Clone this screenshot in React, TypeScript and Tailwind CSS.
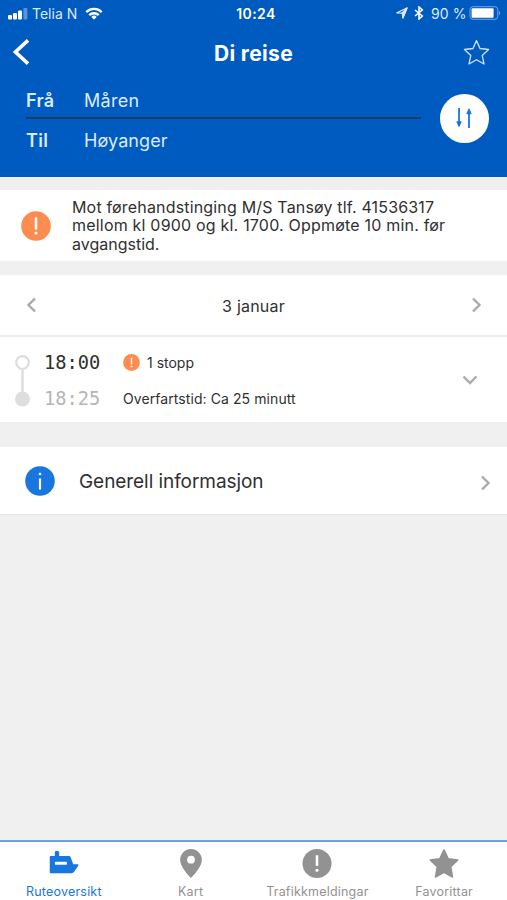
import React from "react";

const Chevron = ({ d, className }: { d: string; className: string }) => (
  <svg viewBox="0 0 16 16" className={className} fill="none" stroke="currentColor" strokeWidth="2.4">
    <path d={d} />
  </svg>
);

const Alert = ({ className }: { className: string }) => (
  <svg viewBox="0 0 30 30" className={className}>
    <circle cx="15" cy="15" r="14.8" fill="currentColor" />
    <path d="M15 7.4v10.2" stroke="#fff" strokeWidth="2.5" strokeLinecap="round" />
    <circle cx="15" cy="22" r="1.5" fill="#fff" />
  </svg>
);

function StatusBar() {
  return (
    <div className="grid h-7 grid-cols-3 items-center pl-2 pr-[6px] text-[14px] leading-7 text-[#dceaff]">
      <div className="flex items-center">
        <svg viewBox="0 0 20 12" className="h-3 w-5" fill="#fff">
          <rect x="0" y="7" width="4" height="4.5" rx="1" />
          <rect x="5" y="5" width="4" height="6.5" rx="1" />
          <rect x="10" y="2.5" width="4" height="9" rx="1" />
          <rect x="15.4" y="0" width="4" height="11.5" rx="1" opacity=".35" />
        </svg>
        <span className="ml-1 w-[46px] whitespace-nowrap text-[14px]">Telia N</span>
        <svg viewBox="0 0 18 13" className="-mt-[2px] ml-[7px] h-[13px] w-[18px]" fill="none" stroke="#fff" strokeWidth="2.3">
          <path d="M1.3 5.1a11 11 0 0 1 15.4 0M4.2 8.2a6.9 6.9 0 0 1 9.6 0" />
          <path d="M9 12.6 6.3 9.9a3.9 3.9 0 0 1 5.4 0Z" fill="#fff" stroke="none" />
        </svg>
      </div>
      <div className="pl-[3px] text-center font-semibold tracking-[0.4px] text-white">10:24</div>
      <div className="flex items-center justify-end">
        <svg viewBox="0 0 12 12" className="-mt-[2px] h-3 w-3" fill="none" stroke="#dceaff" strokeWidth="1.2" strokeLinejoin="round">
          <path d="M.8 5.8 11 1 6.9 11V6.2Z" />
          <path d="M6.2 5.9 11 1 6.9 11Z" fill="#dceaff" />
        </svg>
        <svg viewBox="0 0 10 14" className="-mt-[2px] ml-[6px] h-[14px] w-[10px]" fill="none" stroke="#fff" strokeWidth="1.6">
          <path d="m1 4 7.3 6L5 13V1l3.3 3L1 10" />
        </svg>
        <span className="ml-[7px] w-[38px] whitespace-nowrap text-[14px] tracking-[0.1px]">90 %</span>
        <svg viewBox="0 0 32 14" className="-mt-[2px] h-[14px] w-8" fill="none">
          <rect x="1" y=".7" width="27.8" height="12.6" rx="3" stroke="#72a6e3" />
          <rect x="2.6" y="2.3" width="22" height="9.4" rx="1" fill="#fff" />
          <path d="M30 5v4q1.2-.5 1.2-2T30 5Z" fill="#72a6e3" />
        </svg>
      </div>
    </div>
  );
}

function Header() {
  return (
    <header className="h-[177px] shrink-0 bg-[#005bc0] text-white">
      <StatusBar />
      <div className="flex h-[51px] items-center justify-between pl-3 pr-[17px]">
        <svg viewBox="0 0 18 26" className="-mt-[3px] h-[26px] w-[18px]" fill="none" stroke="#fff" strokeWidth="3.6">
          <path d="M16 1.4 3.4 13 16 24.6" />
        </svg>
        <h1 className="pl-[14px] pt-px text-[21px] font-bold tracking-[0.35px]">Di reise</h1>
        <svg viewBox="0 0 27 27" className="-mt-[2px] h-[27px] w-[27px]" fill="none" stroke="#cfe2fb" strokeWidth="1.3" strokeLinejoin="round">
          <path d="m13.5 1.5 3.5 8 8.6 1-6.4 5.9 1.8 8.6-7.5-4.3L6 25l1.8-8.6-6.4-5.9 8.6-1Z" />
        </svg>
      </div>
      <div className="flex items-center pl-[26px] pr-[18px]">
        <div className="w-[395px] text-[18px] text-[#dceaff]">
          <div className="flex h-10 items-center border-b-2 border-[#123b66] pt-[5px]">
            <b className="w-[58px] font-semibold tracking-[0.3px]">Frå</b>
            <span className="tracking-[0.3px]">Måren</span>
          </div>
          <div className="flex h-[42px] items-center">
            <b className="w-[58px] font-semibold tracking-[0.3px]">Til</b>
            <span className="tracking-[0.1px]">Høyanger</span>
          </div>
        </div>
        <div className="ml-auto flex h-[49px] w-[49px] -translate-y-[2px] items-center justify-center rounded-full bg-white">
          <svg viewBox="0 0 18 22" className="-ml-[1px] h-[22px] w-[18px]" fill="#1976df" stroke="#1976df">
            <path d="M4 1v17M14 21V4" strokeWidth="1.8" fill="none" />
            <path d="M1.8 14.8h4.4L4 19.5ZM11.8 6.8h4.4L14 1.8Z" />
          </svg>
        </div>
      </div>
    </header>
  );
}

function Trip() {
  return (
    <section className="mt-[14px] h-[147px] shrink-0 bg-white text-[#303030]">
      <div className="flex h-[62px] items-center justify-between border-b-2 border-[#ededed] px-[23px]">
        <Chevron d="M12 1.5 5.5 8l6.500 6.500" className="h-4 w-4 text-[#aaa]" />
        <span className="pt-[2px] text-[16px] tracking-[0.2px]">3 januar</span>
        <Chevron d="m5 1.5 6.500 6.500L5 14.500" className="h-4 w-4 text-[#aaa]" />
      </div>
      <div className="flex h-[85px] items-center pl-[14px] pr-[29px]">
        <svg viewBox="0 0 17 54" className="mt-[2px] h-[54px] w-[17px]">
          <path d="M8.5 14v26" stroke="#dedede" strokeWidth="2.5" />
          <circle cx="8.5" cy="8.5" r="6.3" fill="#fff" stroke="#dedede" strokeWidth="2.3" />
          <circle cx="8.5" cy="45" r="7.5" fill="#dedede" />
        </svg>
        <div className="ml-[13px] mt-[2px] w-[79px] font-['DejaVu_Sans_Mono',monospace] text-[18.7px] leading-9">
          <div>18:00</div>
          <div className="text-[#b6b6b6]">18:25</div>
        </div>
        <div className="mt-[2px] text-[14px] leading-9">
          <div className="flex items-center">
            <Alert className="mr-[7px] h-[17px] w-[17px] text-[#fd8c50]" />
            <span>1 stopp</span>
          </div>
          <div className="whitespace-nowrap tracking-[0.08px]">Overfartstid: Ca 25 minutt</div>
        </div>
        <Chevron d="M1.5 4.5 8 11 14.5 4.5" className="ml-auto h-4 w-4 text-[#aaa]" />
      </div>
    </section>
  );
}

function Tab({ label, active, children }: { label: string; active?: boolean; children: React.ReactNode }) {
  return (
    <div className={`flex flex-1 flex-col items-center pl-px pt-[6px] ${active ? "text-[#1976df]" : "text-[#929292]"}`}>
      <svg viewBox="0 0 32 32" className="h-8 w-8" fill="currentColor">{children}</svg>
      <span className="mt-[5px] whitespace-nowrap text-[12.5px] leading-4 tracking-[0.2px]">{label}</span>
    </div>
  );
}

export default function App() {
  return (
    <div className="flex h-[900px] w-[507px] flex-col overflow-hidden bg-[#f0f0f0] font-[Inter,sans-serif]">
      <Header />
      <section className="mt-[13px] flex h-[71px] shrink-0 items-center bg-white pl-[21px]">
        <Alert className="h-[30px] w-[30px] text-[#fd8c50]" />
        <p className="ml-[21px] whitespace-nowrap text-[16px] leading-[18.5px] tracking-[0.2px] text-[#303030]">
          <span className="tracking-[0.17px]">Mot førehandstinging M/S Tansøy tlf. 41536317</span><br />
          <span>mellom kl 0900 og kl. 1700. Oppmøte 10 min. før</span><br />
          <span className="tracking-normal">avgangstid.</span>
        </p>
      </section>
      <Trip />
      <section className="mt-[25px] flex h-[68px] shrink-0 items-center border-b border-[#e6e6e6] bg-white pl-[25px] pr-[14px]">
        <svg viewBox="0 0 30 30" className="h-[30px] w-[30px]">
          <circle cx="15" cy="15" r="14.8" fill="#1976df" />
          <path d="M15 12.5v11" stroke="#fff" strokeWidth="2.2" />
          <circle cx="15" cy="8" r="1.3" fill="#fff" />
        </svg>
        <span className="ml-6 mt-[3px] text-[19px] tracking-[-0.06px] text-[#303030]">Generell informasjon</span>
        <Chevron d="m5 1.5 6.5 6.5L5 14.5" className="ml-auto mt-[5px] h-4 w-4 text-[#aaa]" />
      </section>
      <nav className="mt-auto flex h-[60px] shrink-0 border-t-2 border-[#6aa2e2] bg-white">
        <Tab label="Ruteoversikt" active>
          <path fillRule="evenodd" d="M1.3 25V9.300q0-1 1-1H6.500V4.700q0-1.500 1.500-1.500h1.500q1.500 0 1.500 1.500v3.600h10q1.500 0 2 1.500l2.500 7h4.300q1.800 0 .9 1.500l-4.200 6.200q-1 1.500-2.600 1.500H2q-.7 0-.7-1ZM7.300 14.300q-.7 0-.7.7v1.500q0 .7.700.7h11q.7 0 .7-.7V15q0-.7-.7-.7Z" />
        </Tab>
        <Tab label="Kart">
          <path fillRule="evenodd" d="M16 1A11.200 11.200 0 0 0 4.800 12.200C4.800 20.500 16 31 16 31s11.200-10.500 11.200-18.800A11.200 11.200 0 0 0 16 1Zm0 7a4 4 0 1 1 0 8 4 4 0 0 1 0-8Z" />
        </Tab>
        <Tab label="Trafikkmeldingar">
          <circle cx="16" cy="16" r="15" />
          <path d="M16 7.500v11" stroke="#fff" strokeWidth="2.600" />
          <circle cx="16" cy="23" r="1.600" fill="#fff" />
        </Tab>
        <Tab label="Favorittar">
          <path stroke="currentColor" strokeWidth="1.500" strokeLinejoin="round" d="m16 2 4.300 9 10 1.400-7.300 7 1.800 10.600L16 25.200 7.200 30 9 19.400l-7.300-7 10-1.400Z" />
        </Tab>
      </nav>
    </div>
  );
}
